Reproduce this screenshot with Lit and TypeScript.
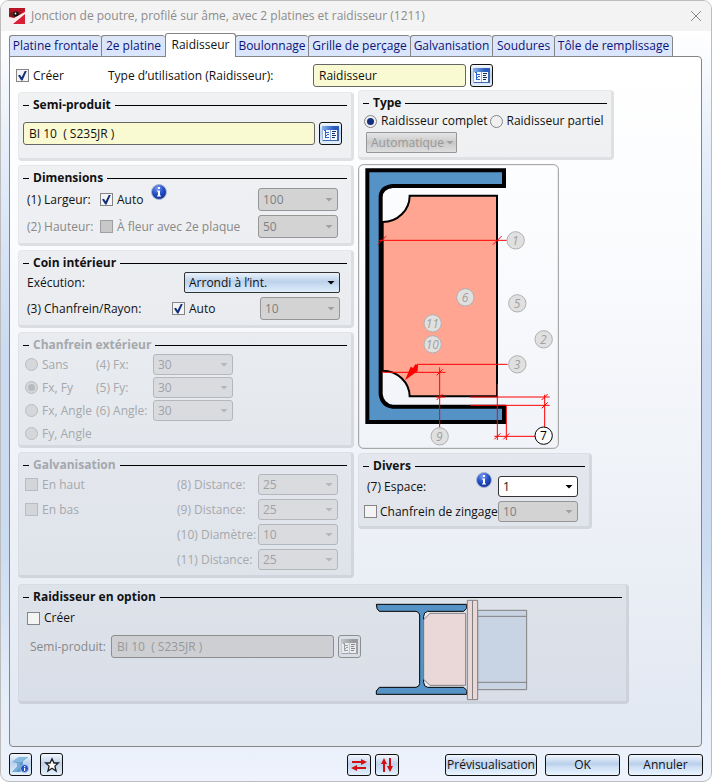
import { LitElement, html, svg, css } from "lit";
import { customElement } from "lit/decorators.js";
import { classMap } from "lit/directives/class-map.js";

const TABS = [
  "Platine frontale", "2e platine", "Raidisseur", "Boulonnage",
  "Grille de perçage", "Galvanisation", "Soudures", "Tôle de remplissage",
];

const catalogIcon = html`<svg class="ic" viewBox="0 0 17 15" width="17" height="15" aria-hidden="true">
  <defs><linearGradient id="bar" x1="0" x2="1"><stop offset="0" stop-color="#86b4ec"/><stop offset=".7" stop-color="#2a5cc0"/></linearGradient></defs>
  <rect width="17" height="15" fill="#4468b0"/><rect width="17" height="4" fill="url(#bar)"/>
  <rect x="1" y="4" width="14" height="10" fill="#f6f9ff"/><rect y="4" width="1" height="11" fill="#9dbbe6"/>
  <path d="M8.500 4v10" stroke="#9cb2dc"/>
  <path d="M2 4.500h2M3.500 5v7M4 6.500h3M5 8.500h2M4 9.500h1M4 11.500h3" stroke="#2f62d4" fill="none"/>
  <path d="M10 5.500h4M10 7.500h3M10 9.500h4M10 11.500h3" stroke="#16305e" fill="none"/>
</svg>`;

const infoIcon = html`<svg class="info" viewBox="0 0 16 16" width="16" height="16" role="img" aria-label="Info">
  <defs><radialGradient id="ball" cx=".4" cy=".25" r=".8"><stop offset="0" stop-color="#7c9ff0"/><stop offset=".5" stop-color="#2450c8"/><stop offset="1" stop-color="#12308c"/></radialGradient></defs>
  <circle cx="8" cy="8" r="7.500" fill="url(#ball)" stroke="#a9b6d4"/>
  <path d="M7 3h2v2H7zM6 6.500h3v5h1v1H6v-1h1v-4H6z" fill="#fff"/>
</svg>`;

const mark = (n: number, x: number, y: number, on = false) => svg`
  <circle class=${on ? "dot on" : "dot"} cx=${x} cy=${y} r="26"></circle>
  <text class=${on ? "num on" : "num"} x=${x - 1} y=${y + 13}>${n}</text>`;

const tick = (x: number, y: number, r = 9) => svg`<path class="dim" d="M${x - r} ${y + r}L${x + r} ${y - r}"></path>`;

@customElement("app-root")
export class AppRoot extends LitElement {
  static styles = css`
    :host { display: block; font: 12px/16px "Open Sans", "Noto Sans", sans-serif; color: #111; }
    * { box-sizing: border-box; }
    button, input, select { font: inherit; color: inherit; margin: 0; }
    .window {
      min-height: 100vh; display: flex; flex-direction: column; overflow: hidden;
      border: 1px solid #bcbcbc; border-radius: 9px;
      background: linear-gradient(#fff 31px, #e4edf9 20%, #cbdaf0 45%, #cbdbf0 70%, #e6eefa 90%, #eef3fc);
    }
    .title { height: 30px; flex: none; display: flex; align-items: center; gap: 6px; padding: 0 8px; background: #f3f3f3; color: #8c8c8c; }
    .title h1 { flex: 1; margin: 0; font: inherit; white-space: nowrap; }
    .close { border: 0; background: none; padding: 0; width: 14px; height: 16px; display: grid; place-items: center; }
    .tabs {
      display: grid; grid-template-columns: 92px 64px 70px 73px 102px 82px 62px 119px; align-items: end;
      height: 26px; padding: 0 8px; position: relative; z-index: 1; margin-bottom: -1px;
    }
    .tab {
      height: 22px; padding: 0; border: 1px solid #858585; border-right-width: 0; border-radius: 3px 3px 0 0;
      background: linear-gradient(#dce6f5, #dae5ff); color: #0c1478; white-space: nowrap; text-align: center;
    }
    .tab:last-child { border-right-width: 1px; }
    .tab.on { height: 24px; background: #fff; color: #111; border-right-width: 1px; border-bottom: 0; margin-right: -1px; padding-bottom: 2px; }
    .panel {
      flex: 1; margin: 0 9px 0 8px; padding: 7px 72px 8px 8px; border: 1px solid #858585; border-radius: 0 4px 4px 4px;
      background: linear-gradient(#fff, #fbfcfe 25%, #eef1f7 65%, #e1e8f2); min-width: 0;
    }
    .top { display: flex; align-items: center; gap: 4px; margin-left: -2px; }
    .top .create { width: 88px; }
    .top .use { display: block; width: 201px; }
    .top .text { flex: 0 1 153px; }
    .cols { display: grid; grid-template-columns: minmax(0, 1fr) 271px; gap: 4px; margin-top: 3px; }
    .left, .right { display: flex; flex-direction: column; gap: 4px; }
    .left { padding-top: 2px; }
    .right { align-items: flex-start; }
    .group {
      border: solid rgba(110, 110, 120, .14); border-width: 1px 3px 3px 1px;
      border-right-color: rgba(110, 110, 120, .2); border-bottom-color: rgba(110, 110, 120, .2);
      border-radius: 4px; background: rgba(150, 155, 160, .13); background-clip: padding-box; padding: 4px 4px 0;
    }
    .head { display: flex; align-items: center; gap: 4px; height: 16px; }
    .head::before, .head::after { content: ""; height: 1px; background: #000; width: 6px; }
    .head::after { flex: 1; }
    .head h2 { margin: 0; font: bold 12px/16px "Open Sans", "Noto Sans", sans-serif; white-space: nowrap; }
    .off { color: #a5a8ac; }
    .dim-text { color: #888; }
    .row { display: flex; align-items: center; gap: 4px; white-space: nowrap; }
    .grow { flex: 1; }
    label { display: flex; align-items: center; gap: 4px; white-space: nowrap; }

    .text { height: 23px; min-width: 0; padding: 0 5px; border: 1px solid #666; border-radius: 3px; background: #fafad2; }
    .text:disabled { background: #cecfd2; border-color: #8e8e90; color: #96999c; }
    .iconbtn {
      flex: none; width: 23px; height: 23px; padding: 0; display: grid; place-items: center; border: 1px solid #111; border-radius: 3px;
      background: linear-gradient(#f4f8fe, #bdd2ec 45%, #e4f1fd);
    }
    .iconbtn:disabled { border-color: #8e8e90; background: #d9dee6; }
    .iconbtn:disabled .ic { filter: grayscale(1); opacity: .5; }

    .box { appearance: none; flex: none; width: 13px; height: 13px; border: 1px solid #858585; background: #f4f4f4; display: grid; place-items: center; }
    .box:checked::after { content: ""; width: 9px; height: 10px; background: #14307c; clip-path: polygon(0 50%, 22% 42%, 40% 68%, 78% 0, 100% 0, 50% 100%, 36% 100%); }
    .box:disabled { background: #c8c8c8; border-color: #a0a0a0; }
    .off .box:disabled { background: #d3d5d8; border-color: #b9bcc0; }
    .radio { appearance: none; flex: none; width: 13px; height: 13px; border: 1px solid #858585; border-radius: 50%; background: #f0f0f0; display: grid; place-items: center; }
    .radio:checked::after { content: ""; width: 7px; height: 7px; border-radius: 50%; background: #14307c; }
    .radio:disabled { background: #d5d7da; border-color: #b9bcc0; }
    .radio:disabled:checked::after { background: #b8babd; }

    .pick { position: relative; flex: none; display: block; width: 80px; height: 21px; }
    .pick.tall { height: 23px; }
    .pick.wide { width: 156px; }
    .pick.menu { width: 91px; }
    .pick select { appearance: none; width: 100%; height: 100%; padding: 0 16px 0 4px; border: 1px solid #333; border-radius: 3px; background: #fff; opacity: 1; }
    .pick::after { content: ""; position: absolute; right: 5px; top: 50%; margin-top: -2px; width: 8px; height: 4px; background: #000; clip-path: polygon(0 0, 100% 0, 50% 100%); pointer-events: none; }
    .pick.dis select { background: #d3d3d4; border-color: #969696; color: #808080; }
    .pick.dis::after { background: #a0a0a0; }
    .off .pick.dis select { background: #d9dbdf; border-color: #b4b7bb; color: #a0a2a6; }
    .off .pick.dis::after { background: #b4b6ba; }
    .pick.wide select { background: linear-gradient(#eaf2fb, #bcd1eb 45%, #dfeefc); border-radius: 2px; }
    .pick.menu select { background: linear-gradient(#e6e6e6, #c9c9c9 50%, #dedede); border-radius: 1px; color: #999; padding-right: 8px; }
    .pick.menu::after { right: 3px; }

    .semi { height: 69px; }
    .semi .row { margin-top: 9px; padding-right: 5px; }
    .dims { height: 81px; }
    .dims .rows { display: flex; flex-direction: column; gap: 4px; padding: 2px 9px 0 4px; }
    .dims .cap { width: 69px; }
    .info { flex: none; align-self: flex-start; }
    .dims .info { margin: -4px 0 0 4px; }
    .coin { height: 78px; }
    .coin .rows { display: flex; flex-direction: column; gap: 4px; padding: 1px 7px 0 4px; }
    .coin .cap { width: 141px; }
    .cham { height: 116px; }
    .cham .rows { display: grid; grid-template-columns: 67px 53px 1fr; grid-auto-rows: 21px; align-items: center; gap: 2px 4px; padding: 1px 2px 0; white-space: nowrap; }
    .galv { height: 126px; }
    .galv .rows { display: grid; grid-template-columns: 1fr 77px 80px; grid-auto-rows: 21px; align-items: center; gap: 4px; padding: 1px 9px 0 2px; white-space: nowrap; }
    .type { width: 256px; height: 70px; }
    .type .row { gap: 2px; padding-left: 1px; height: 20px; }
    .type .pick { margin: 1px 0 0 3px; }
    .figure { display: block; width: 201px; height: 285px; }
    .divers { width: 234px; height: 76px; }
    .divers .rows { display: flex; flex-direction: column; gap: 4px; padding: 2px 7px 0 1px; }
    .divers .row { gap: 0; }
    .divers label.grow { min-width: 0; gap: 3px; }
    .divers .cap { padding-left: 3px; }
    .divers .info { margin: -4px 6px 0 0; }
    .opt { height: 120px; margin-top: 6px; }
    .opt .body { display: flex; gap: 14px; }
    .opt .form { display: flex; flex-direction: column; gap: 9px; padding: 5px 0 0 4px; flex: 0 1 338px; min-width: 0; }
    .opt .form .row { padding-left: 3px; }
    .opt .form .cap { width: 77px; }
    .opt .text { flex: 1; }
    .beam { flex: none; display: block; margin-top: -6px; }

    .footer { display: flex; align-items: center; gap: 8px; padding: 6px 8px 5px; }
    .btn { height: 22px; width: 75px; padding: 0; border: 1px solid #111; border-radius: 3px; background: linear-gradient(#f2f7fe, #b9cfea 45%, #cfe0f4 60%, #e9f5ff); }
    .btn.big { width: 92px; }
    .pair { display: flex; gap: 4px; margin: 0 38px 0 auto; }
    .pair .iconbtn { width: 24px; height: 22px; }

    .dim { stroke: #f00; stroke-width: 3; fill: none; }
    .dot { fill: #e0e0e0; stroke: #b0b0b0; stroke-width: 3; }
    .dot.on { fill: #fff; stroke: #000; }
    .num { font-style: italic; font-size: 36px; fill: #a0a0a0; text-anchor: middle; }
    .num.on { fill: #000; font-style: normal; }
  `;

  private combo(value: string, label: string, kind = "", disabled = true) {
    return html`<span class=${"pick " + kind + (disabled ? " dis" : "")}>
      <select aria-label=${label} ?disabled=${disabled}><option>${value}</option></select></span>`;
  }

  private check(text: string, checked = false, disabled = false, cls = "") {
    return html`<label class=${cls}><input class="box" type="checkbox" ?checked=${checked} ?disabled=${disabled}>${text}</label>`;
  }

  private radio(name: string, text: string, checked = false, disabled = false) {
    return html`<label><input class="radio" type="radio" name=${name} ?checked=${checked} ?disabled=${disabled}>${text}</label>`;
  }

  private head(text: string) {
    return html`<div class="head"><h2>${text}</h2></div>`;
  }

  private figure() {
    return html`<svg class="figure" viewBox="3 12 603 855" role="img" aria-label="Raidisseur">
      <rect x="5" y="14" width="599" height="851" rx="14" fill="none" stroke="#999" stroke-width="3"/>
      <path d="M158 107H420V709H158A81 78 0 0 0 77 632V186A81 79 0 0 0 158 107Z" fill="#ffa592" stroke="#000" stroke-width="6"/>
      <path d="M31 31H441V78H107Q71 82 71 112V703Q75 736 107 740H441V786H31Z" fill="#5592c6" stroke="#000" stroke-width="12"/>
      <path class="dim" d="M65 241H450M452 613H180M75 637H265M248 622V803M237 711H265M340 711H578M340 736H578M563 704V803M421 672V840M448 736V840M412 829H535"/>
      ${tick(75, 241, 13)}${tick(421, 241, 13)}${tick(248, 637)}${tick(248, 711)}${tick(563, 711)}${tick(563, 736)}${tick(421, 829)}${tick(448, 829)}
      <path d="M144 661L161 620L168 624L175 613L183 615L182 633Z" fill="#f00"/>
      ${mark(1, 476, 241)}${mark(6, 325, 412)}${mark(5, 481, 430)}${mark(11, 227, 490)}${mark(10, 227, 553)}
      ${mark(2, 560, 538)}${mark(3, 481, 613)}${mark(9, 248, 829)}${mark(7, 560, 827, true)}
    </svg>`;
  }

  private beam() {
    return html`<svg class="beam" viewBox="57 72 459 306" width="153" height="102" role="img" aria-label="Raidisseur en option">
      <path d="M203 112H332V335H203Z" fill="#e6ebf4"/>
      <path d="M61 88H332V100L323 109H215Q203 111 203 124V322Q203 335 215 337H323L332 346V358H61V348L70 337H180Q191 335 191 325V120Q189 110 180 109H70Q61 104 61 88Z" fill="#5592c6" stroke="#000" stroke-width="3"/>
      <path d="M222 115H329V331H222L203 313V134Z" fill="#ead8d8" stroke="#808080" stroke-width="3"/>
      <path d="M365 106H512V344H365Z" fill="#c8d4e4" stroke="#808080" stroke-width="3"/>
      <path d="M365 124H512M365 322H512" stroke="#808080" stroke-width="3"/>
      <path d="M334 76H365V374H334ZM349.500 76V374" fill="#ead8d8" stroke="#808080" stroke-width="3"/>
    </svg>`;
  }

  render() {
    return html`<div class="window">
      <header class="title">
        <svg width="16" height="16" viewBox="0 0 16 16" aria-hidden="true">
          <rect width="16" height="16" fill="#d81e34"/><path d="M0 0H16V2L9 7L0 5Z" fill="#b81428"/>
          <path d="M0 6Q6 1 12 5L9 8L5 10L0 8Z" fill="#6e1c1c"/><circle cx="7" cy="6" r="2.500" fill="#111"/><circle cx="6.500" cy="5.500" r=".9" fill="#fff"/>
          <path d="M0 9L5 10L16 4V6L4 16H0Z" fill="#fbeeee"/>
        </svg>
        <h1>Jonction de poutre, profilé sur âme, avec 2 platines et raidisseur (1211)</h1>
        <button class="close" aria-label="Fermer"><svg width="12" height="12" viewBox="0 0 12 12"><path d="M1 1L11 11M11 1L1 11" stroke="#8c8c8c" fill="none"/></svg></button>
      </header>
      <div class="tabs" role="tablist">
        ${TABS.map((t) => html`<button role="tab" class=${classMap({ tab: true, on: t === "Raidisseur" })} aria-selected=${t === "Raidisseur"}>${t}</button>`)}
      </div>
      <main class="panel">
        <div class="top">
          ${this.check("Créer", true, false, "create")}
          <label class="use" for="use">Type d’utilisation (Raidisseur):</label>
          <input class="text" id="use" value="Raidisseur">
          <button class="iconbtn" aria-label="Catalogue">${catalogIcon}</button>
        </div>
        <div class="cols">
          <div class="left">
            <section class="group semi">${this.head("Semi-produit")}
              <div class="row"><input class="text grow" aria-label="Semi-produit" value="BI 10  ( S235JR )">
                <button class="iconbtn" aria-label="Catalogue">${catalogIcon}</button></div>
            </section>
            <section class="group dims">${this.head("Dimensions")}
              <div class="rows">
                <div class="row"><span class="cap">(1) Largeur:</span>${this.check("Auto", true)}${infoIcon}<span class="grow"></span>${this.combo("100", "Largeur", "tall")}</div>
                <div class="row dim-text"><span class="cap">(2) Hauteur:</span>${this.check("À fleur avec 2e plaque", false, true)}<span class="grow"></span>${this.combo("50", "Hauteur", "tall")}</div>
              </div>
            </section>
            <section class="group coin">${this.head("Coin intérieur")}
              <div class="rows">
                <div class="row"><span class="grow">Exécution:</span>${this.combo("Arrondi à l’int.", "Exécution", "wide", false)}</div>
                <div class="row"><span class="cap">(3) Chanfrein/Rayon:</span>${this.check("Auto", true)}<span class="grow"></span>${this.combo("10", "Chanfrein/Rayon", "tall")}</div>
              </div>
            </section>
            <section class="group cham off">${this.head("Chanfrein extérieur")}
              <div class="rows">
                ${[["Sans", "(4) Fx:"], ["Fx, Fy", "(5) Fy:"], ["Fx, Angle", "(6) Angle:"], ["Fy, Angle", ""]].map(([r, c]) => html`
                  ${this.radio("chanfrein", r, r === "Fx, Fy", true)}<span>${c}</span>${c ? this.combo("30", c) : html`<span></span>`}`)}
              </div>
            </section>
            <section class="group galv off">${this.head("Galvanisation")}
              <div class="rows">
                ${[["En haut", "(8) Distance:", "25"], ["En bas", "(9) Distance:", "25"], ["", "(10) Diamètre:", "10"], ["", "(11) Distance:", "25"]].map(([b, c, v]) => html`
                  ${b ? this.check(b, false, true) : html`<span></span>`}<span>${c}</span>${this.combo(v, c)}`)}
              </div>
            </section>
          </div>
          <div class="right">
            <section class="group type">${this.head("Type")}
              <div class="row">${this.radio("type", "Raidisseur complet", true)}${this.radio("type", "Raidisseur partiel")}</div>
              ${this.combo("Automatique", "Position", "menu")}
            </section>
            ${this.figure()}
            <section class="group divers">${this.head("Divers")}
              <div class="rows">
                <div class="row"><span class="cap grow">(7) Espace:</span>${infoIcon}${this.combo("1", "Espace", "", false)}</div>
                <div class="row">${this.check("Chanfrein de zingage", false, false, "grow")}${this.combo("10", "Chanfrein de zingage")}</div>
              </div>
            </section>
          </div>
        </div>
        <section class="group opt">${this.head("Raidisseur en option")}
          <div class="body">
            <div class="form">
              ${this.check("Créer")}
              <div class="row"><label class="cap dim-text" for="opt">Semi-produit:</label><input class="text" id="opt" disabled value="BI 10  ( S235JR )">
                <button class="iconbtn" disabled aria-label="Catalogue">${catalogIcon}</button></div>
            </div>
            ${this.beam()}
          </div>
        </section>
      </main>
      <footer class="footer">
        <button class="iconbtn" aria-label="Informations"><svg width="19" height="19" viewBox="0 0 19 19">
          <path d="M1 7L8 2H17L12 6V11L14 12L9 17H1L6 12V8Z" fill="#5e9ccb"/><path d="M1 7L8 2H17L11 7Z" fill="#86bade"/><path d="M6 12V8L9 7V12L5 17H1Z" fill="#77aed6"/>
          <circle cx="13.500" cy="13.500" r="4" fill="#2450c8" stroke="#c5d2ea" stroke-width=".8"/><path d="M13 11h1.200v1.200H13zM13 13h1.200v3H13z" fill="#fff"/></svg></button>
        <button class="iconbtn" aria-label="Favoris"><svg width="16" height="16" viewBox="0 0 16 16">
          <path d="M8 1.800L9.900 6H14.300L10.900 9.100L12.100 14L8 11.300L3.900 14L5.100 9.100L1.700 6H6.100Z" fill="#fff" stroke="#1c1c1c" stroke-width="1.300"/></svg></button>
        <div class="pair">
          <button class="iconbtn" aria-label="Inverser horizontalement"><svg width="18" height="16" viewBox="0 0 18 16"><path d="M2 5H13M5 11H16" stroke="#d40f14" stroke-width="2"/><path d="M11 2L17 5L11 8ZM7 8L1 11L7 14Z" fill="#d40f14"/></svg></button>
          <button class="iconbtn" aria-label="Inverser verticalement"><svg width="16" height="16" viewBox="0 0 16 16"><path d="M5 4V15M11 1V12" stroke="#d40f14" stroke-width="2"/><path d="M2 7L5 1L8 7ZM8 9L11 15L14 9Z" fill="#d40f14"/></svg></button>
        </div>
        <button class="btn big">Prévisualisation</button><button class="btn">OK</button><button class="btn">Annuler</button>
      </footer>
    </div>`;
  }
}
